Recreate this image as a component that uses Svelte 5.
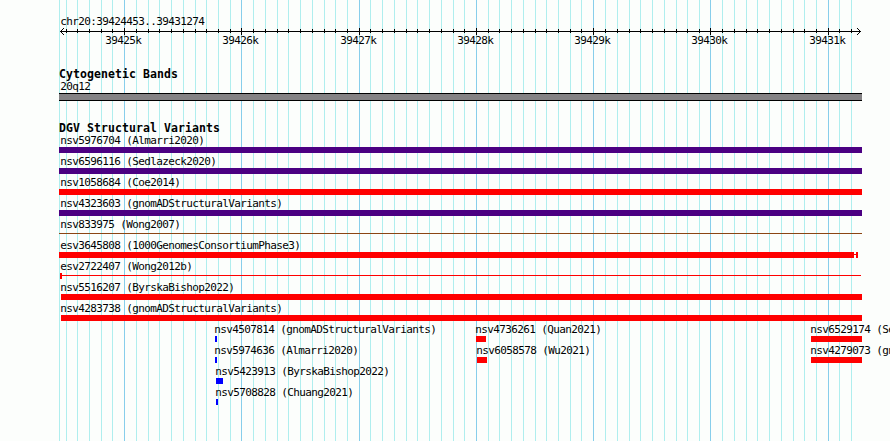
<script lang="ts">
	type Glyph = { x: number; width: number; thin?: boolean };
	type Feature = { name: string; x: number; color: string; glyphs: Glyph[] };

	const major = [124, 241, 359, 476, 593, 710, 828];
	const minor = [
		59, 66, 77, 89, 101, 112, 136, 148, 159, 171, 183, 195, 206, 218, 230, 253, 265, 277, 288, 300,
		312, 324, 335, 347, 370, 382, 394, 406, 417, 429, 441, 453, 464, 488, 499, 511, 523, 535, 546,
		558, 570, 581, 605, 617, 629, 640, 652, 664, 676, 687, 699, 722, 734, 746, 757, 769, 781, 793,
		804, 816, 839, 851
	];

	function bar(name: string, x: number, start: number, end: number, color: string): Feature {
		return { name, x, color, glyphs: [{ x: start, width: end - start }] };
	}

	const rows: Feature[][] = [
		[bar('nsv5976704 (Almarri2020)', 60, 59, 862, 'indigo')],
		[bar('nsv6596116 (Sedlazeck2020)', 60, 59, 862, 'indigo')],
		[bar('nsv1058684 (Coe2014)', 60, 59, 862, 'red')],
		[bar('nsv4323603 (gnomADStructuralVariants)', 60, 59, 862, 'indigo')],
		[
			{
				name: 'nsv833975 (Wong2007)',
				x: 60,
				color: 'brown',
				glyphs: [{ x: 59, width: 803, thin: true }]
			}
		],
		[
			{
				name: 'esv3645808 (1000GenomesConsortiumPhase3)',
				x: 60,
				color: 'red',
				glyphs: [
					{ x: 59, width: 795 },
					{ x: 854, width: 2, thin: true },
					{ x: 856, width: 2 }
				]
			}
		],
		[
			{
				name: 'esv2722407 (Wong2012b)',
				x: 60,
				color: 'red',
				glyphs: [
					{ x: 60, width: 2 },
					{ x: 62, width: 799, thin: true }
				]
			}
		],
		[bar('nsv5516207 (ByrskaBishop2022)', 60, 61, 862, 'red')],
		[bar('nsv4283738 (gnomADStructuralVariants)', 60, 61, 862, 'red')],
		[
			bar('nsv4507814 (gnomADStructuralVariants)', 214, 215, 217, 'blue'),
			bar('nsv4736261 (Quan2021)', 475, 476, 486, 'red'),
			bar('nsv6529174 (Sedlazeck2020)', 810, 811, 862, 'red')
		],
		[
			bar('nsv5974636 (Almarri2020)', 214, 215, 217, 'blue'),
			bar('nsv6058578 (Wu2021)', 476, 477, 487, 'red'),
			bar('nsv4279073 (gnomADStructuralVariants)', 810, 811, 862, 'red')
		],
		[bar('nsv5423913 (ByrskaBishop2022)', 215, 216, 223, 'blue')],
		[bar('nsv5708828 (Chuang2021)', 215, 216, 218, 'blue')]
	];
</script>

<div class="browser">
	<svg class="gridlines" width="890" height="441" shape-rendering="crispEdges">
		{#each minor as x}
			<rect {x} y="0" width="1" height="441" fill="#afeeee" />
		{/each}
		{#each major as x}
			<rect {x} y="0" width="1" height="441" fill="#87ceeb" />
		{/each}
	</svg>

	<header>
		<div class="label region">chr20:39424453..39431274</div>
		<svg class="scale" width="890" height="8" shape-rendering="crispEdges">
			<rect x="60" y="3" width="801" height="1" />
			{#each minor.slice(1) as x}
				<rect {x} y="2" width="1" height="3" />
			{/each}
			{#each major as x}
				<rect {x} y="0" width="1" height="7" />
			{/each}
			{#each [1, 2, 3] as n}
				<rect x={60 + n} y={3 - n} width="1" height="1" />
				<rect x={60 + n} y={3 + n} width="1" height="1" />
				<rect x={860 - n} y={3 - n} width="1" height="1" />
				<rect x={860 - n} y={3 + n} width="1" height="1" />
			{/each}
			{#each minor.slice(1) as x}
				<rect {x} y="1" width="1" height="1" />
			{/each}
		</svg>
		<div class="ticks">
			{#each major as x, i}
				<span class="label" style:margin-left="{x - 19}px">{39425 + i}k</span>
			{/each}
		</div>
	</header>

	<section class="cytobands">
		<h2>Cytogenetic Bands</h2>
		<div class="label band-name">20q12</div>
		<div class="band"></div>
	</section>

	<section class="variants">
		<h2>DGV Structural Variants</h2>
		{#each rows as row}
			<div class="row">
				{#each row as feature}
					<span class="label" style:margin-left="{feature.x}px">{feature.name}</span>
					{#each feature.glyphs as glyph}
						<i
							class={feature.color}
							class:thin={glyph.thin}
							style:margin-left="{glyph.x}px"
							style:width="{glyph.width}px"
						></i>
					{/each}
				{/each}
			</div>
		{/each}
	</section>
</div>

<style>
	:global(body) {
		background: #fcfefc;
	}

	.browser {
		position: relative;
		width: 890px;
		height: 441px;
		overflow: hidden;
		background: #fcfefc;
		color: #000;
		font-family: 'DejaVu Sans Mono', 'Liberation Mono', monospace;
		font-size: 11px;
	}

	.gridlines {
		position: absolute;
		top: 0;
		left: 0;
	}

	header,
	section {
		position: relative;
	}

	header {
		height: 68px;
		padding-top: 15px;
		box-sizing: border-box;
	}

	.label {
		height: 13px;
		line-height: 13px;
		letter-spacing: -0.622px;
		text-indent: 0.3px;
		white-space: pre;
	}

	.region {
		margin-left: 60px;
	}

	.scale {
		display: block;
	}

	.ticks {
		display: grid;
		margin-top: -2px;
	}

	.ticks .label {
		grid-area: 1 / 1;
	}

	h2 {
		height: 12px;
		margin: 0 0 0 59px;
		font-size: 11.5px;
		line-height: 12px;
		font-weight: bold;
		letter-spacing: 0.077px;
	}

	.band-name {
		margin-left: 60px;
	}

	.band {
		box-sizing: border-box;
		width: 803px;
		height: 8px;
		margin-left: 59px;
		border: solid #000;
		border-width: 1px 0;
		background: #848284;
	}

	.variants {
		padding-top: 21px;
	}

	.row {
		display: grid;
		grid-template: 13px 8px / 890px;
	}

	.row .label {
		grid-area: 1 / 1;
	}

	i {
		grid-area: 2 / 1;
		height: 6px;
	}

	.thin {
		height: 1px;
		margin-top: 2px;
	}

	.indigo {
		background: #4b0082;
	}

	.red {
		background: #f00;
	}

	.blue {
		background: #00f;
	}

	.brown {
		background: #8b4513;
	}
</style>
